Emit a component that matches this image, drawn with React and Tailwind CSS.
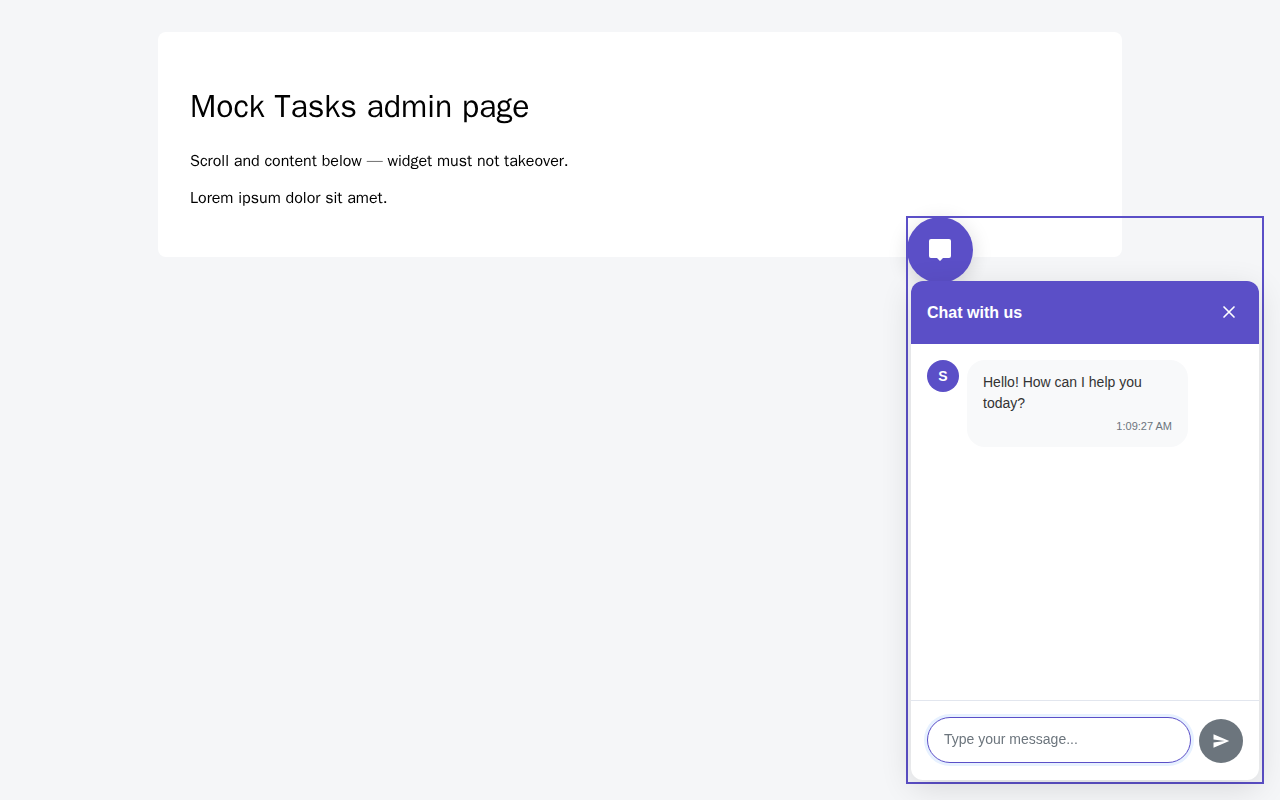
export default function App() {
  return (
    <div className="min-h-[800px] bg-[#f5f6f8] pt-8 [font-family:'WenQuanYi_Zen_Hei','Liberation_Sans',sans-serif]">
      <div className="ml-[158px] w-[964px] rounded-lg bg-white px-8 pt-8 pb-12 text-black">
        <h1 className="mt-[21px] text-[32px] leading-[44px] font-normal">Mock Tasks admin page</h1>
        <p className="mt-[22px] text-base leading-[21px]">Scroll and content below — widget must not takeover.</p>
        <p className="mt-4 text-base leading-[21px]">Lorem ipsum dolor sit amet.</p>
      </div>

      <div className="fixed top-[218px] left-[908px] flex h-[564px] w-[354px] flex-col items-start outline-2 outline-[#5b4fc7] [font-family:'Liberation_Sans',Arial,sans-serif]">
        <button className="-mt-px -ml-px flex h-[66px] w-[66px] shrink-0 items-center justify-center rounded-full bg-[#5b4fc7] shadow-[0_4px_20px_rgba(0,0,0,0.15)]">
          <svg width="24" height="24" viewBox="0 0 24 24" fill="white">
            <path d="M3 1h18a2 2 0 0 1 2 2v15a2 2 0 0 1-2 2h-6l-3 3-3-3H3a2 2 0 0 1-2-2V3a2 2 0 0 1 2-2z" />
          </svg>
        </button>
        <div className="relative -mt-[2px] ml-[3px] flex h-[499px] w-[348px] flex-col overflow-hidden rounded-xl bg-white shadow-[0_8px_32px_rgba(0,0,0,0.12)]">
          <div className="flex h-[63px] shrink-0 items-center justify-between bg-[#5b4fc7] pr-5 pl-4 text-white">
            <span className="text-base leading-[18px] font-bold">Chat with us</span>
            <svg className="-mt-[2px]" width="20" height="20" viewBox="0 0 24 24" fill="none" stroke="white" strokeWidth="2" strokeLinecap="round">
              <path d="M18 6 6 18M6 6l12 12" />
            </svg>
          </div>
          <div className="flex min-h-0 flex-1 items-start gap-2 p-4">
            <div className="flex h-8 w-8 shrink-0 items-center justify-center rounded-full bg-[#5b4fc7] text-sm font-bold text-white">S</div>
            <div className="w-[221px] rounded-[18px] bg-[#f8f9fa] px-4 pt-[12px] pb-[14px]">
              <p className="text-sm leading-[21px] text-[#333]">Hello! How can I help you today?</p>
              <p className="mt-[6px] text-right text-[11px] leading-[13px] text-[#6c757d]">1:09:27 AM</p>
            </div>
          </div>
          <div className="flex h-[80px] shrink-0 items-end gap-2 border-t border-[#e2e6ee] px-4 pb-[17px]">
            <input
              readOnly
              placeholder="Type your message..."
              className="h-[46px] w-[264px] rounded-[23px] border border-[#5b4fc7] bg-white px-4 pb-[2px] text-sm text-[#333] shadow-[0_0_0_3px_#e7f1ff] outline-none placeholder:text-[#6c757d]"
            />
            <button className="flex h-11 w-11 shrink-0 items-center justify-center rounded-full bg-[#6c757d]">
              <svg width="18" height="18" viewBox="0 0 24 24" fill="white">
                <path d="M2 21l21-9L2 3v7l15 2-15 2z" />
              </svg>
            </button>
          </div>
        </div>
      </div>
    </div>
  );
}
